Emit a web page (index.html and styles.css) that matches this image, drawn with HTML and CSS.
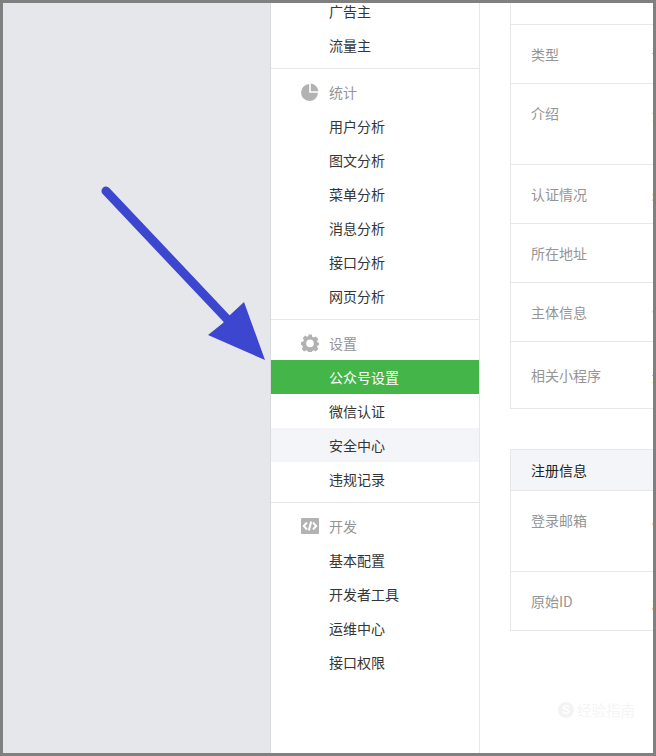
FILE: index.html
```html
<!DOCTYPE html>
<html lang="zh-CN">
<head>
<meta charset="utf-8">
<title>公众号设置</title>
<link rel="stylesheet" href="styles.css">
</head>
<body>
<div class="frame">
  <div class="backdrop"></div>
  <nav class="sidebar">
    <div class="menu">
      <section class="group">
        <a class="item">广告主</a>
        <a class="item">流量主</a>
      </section>
      <section class="group">
        <h3 class="title">
          <svg class="icon" viewBox="0 0 18 18"><path d="M8.200 1v8.800H17A8.500 8.500 0 1 1 8.200 1z"/><path d="M9.800.6A8.500 8.500 0 0 1 17.400 8.200H9.800z"/></svg>
          统计
        </h3>
        <a class="item">用户分析</a>
        <a class="item">图文分析</a>
        <a class="item">菜单分析</a>
        <a class="item">消息分析</a>
        <a class="item">接口分析</a>
        <a class="item">网页分析</a>
      </section>
      <section class="group">
        <h3 class="title">
          <svg class="icon" viewBox="0 0 18 18"><path fill-rule="evenodd" d="M7.200.6h3.600l.5 2.300 1.500.7 2-1.200 2.500 2.500-1.200 2 .6 1.500 2.300.5v2l-2.300.5-.6 1.500 1.200 2-2.500 2.500-2-1.200-1.500.7-.5 2.300H7.200l-.5-2.300-1.500-.7-2 1.200L.7 14.900l1.200-2-.6-1.500L0 10.900V8.100l2.300-.5.6-1.500-1.200-2 2.500-2.500 2 1.200 1.500-.7zM9 5.600a3.800 3.800 0 1 0 0 7.600 3.800 3.800 0 0 0 0-7.600z"/></svg>
          设置
        </h3>
        <a class="item active">公众号设置</a>
        <a class="item">微信认证</a>
        <a class="item hover">安全中心</a>
        <a class="item">违规记录</a>
      </section>
      <section class="group last">
        <h3 class="title">
          <svg class="icon code" viewBox="0 0 18 16"><rect width="18" height="16" rx="1"/><path class="glyph" d="M6 4.500 2.800 8 6 11.500M12 4.500 15.200 8 12 11.500M10.200 3.600 7.800 12.400"/></svg>
          开发
        </h3>
        <a class="item">基本配置</a>
        <a class="item">开发者工具</a>
        <a class="item">运维中心</a>
        <a class="item">接口权限</a>
      </section>
    </div>
  </nav>
  <main class="content">
    <div class="panel first">
      <div class="row short"></div>
      <div class="row"><span class="label">类型</span><span class="value">订阅号</span></div>
      <div class="row tall"><span class="label">介绍</span><span class="value">分享</span></div>
      <div class="row"><span class="label">认证情况</span><span class="value">未认证</span></div>
      <div class="row"><span class="label">所在地址</span><span class="value"></span></div>
      <div class="row"><span class="label">主体信息</span><span class="value">个人</span></div>
      <div class="row wide"><span class="label">相关小程序</span><span class="value">无</span></div>
    </div>
    <div class="panel">
      <div class="heading">注册信息</div>
      <div class="row tall"><span class="label">登录邮箱</span><span class="value">a</span></div>
      <div class="row"><span class="label">原始ID</span><span class="value">g</span></div>
    </div>
  </main>
  <svg class="arrow" viewBox="0 0 656 756" aria-hidden="true">
    <path class="shaft" d="M106 191 227 319"/>
    <path class="head" d="M265 360 208 335 223 323 230 315 244 302z"/>
  </svg>
  <div class="watermark"><span class="wm-logo">S</span><span class="wm-text">经验指南</span></div>
</div>
</body>
</html>
```
FILE: styles.css
```css
* { box-sizing: border-box; }
html, body { margin: 0; height: 100%; }
body { font-family: "Noto Sans CJK SC", "Liberation Sans", sans-serif; font-size: 14px; color: #353535; background: #fff; }

.frame {
  position: relative;
  display: flex;
  width: 656px;
  height: 756px;
  border: 3px solid #808080;
  overflow: hidden;
  background: #fff;
}
.backdrop { flex: 0 0 268px; background: #e6e7ea; border-right: 1px solid #d9dadf; }

.sidebar { flex: 0 0 209px; border-right: 1px solid #e7e7eb; overflow: hidden; }
.menu { margin-top: -9px; }
.group { padding-bottom: 6px; border-bottom: 1px solid #e7e7eb; }
.group.last { border-bottom: 0; }

.title {
  display: flex;
  align-items: center;
  height: 34px;
  margin: 6px 0 0;
  padding-left: 30px;
  font-size: 14px;
  font-weight: 400;
  color: #959595;
}
.icon { width: 18px; height: 18px; margin-right: 10px; fill: #b2b2b2; flex: none; }
.icon.code { height: 16px; }
.glyph { fill: none; stroke: #fff; stroke-width: 2; }

.item { display: block; height: 34px; line-height: 34px; padding-left: 58px; color: #353535; }
.item.active { background: #44b549; color: #fff; }
.item.hover { background: #f4f5f9; }

.content { flex: 1; min-width: 0; padding-left: 30px; overflow: hidden; margin-top: -3px; }
.panel {
  width: 300px;
  margin-bottom: 40px;
  border-left: 1px solid #e7e7eb;
  border-bottom: 1px solid #e7e7eb;
}
.row {
  display: flex;
  height: 59px;
  padding-top: 17px;
  line-height: 24px;
  border-top: 1px solid #e7e7eb;
  color: #959595;
}
.row.short { height: 24px; border-top: 0; border-bottom: 0; }
.row.tall { height: 81px; }
.row.wide { height: 67px; padding-top: 21px; }
.label { flex: 0 0 141px; padding-left: 20px; }
.value { color: #353535; }
.heading {
  height: 41px;
  padding-left: 20px;
  line-height: 41px;
  background: #f4f5f9;
  border-top: 1px solid #e7e7eb;
  color: #222;
}

.arrow { position: absolute; left: -3px; top: -3px; width: 656px; height: 756px; pointer-events: none; }
.shaft { fill: none; stroke: #3d46cf; stroke-width: 9; stroke-linecap: round; }
.head { fill: #3d46cf; }

.watermark { position: absolute; right: 18px; bottom: 34px; display: flex; align-items: center; gap: 3px; color: #f5f5f5; font-size: 14.500px; line-height: 18px; }
.wm-logo { width: 16px; height: 16px; border-radius: 50%; background: #f3f3f3; color: #fff; font: 700 12px/16px "Liberation Sans", sans-serif; text-align: center; }
```
